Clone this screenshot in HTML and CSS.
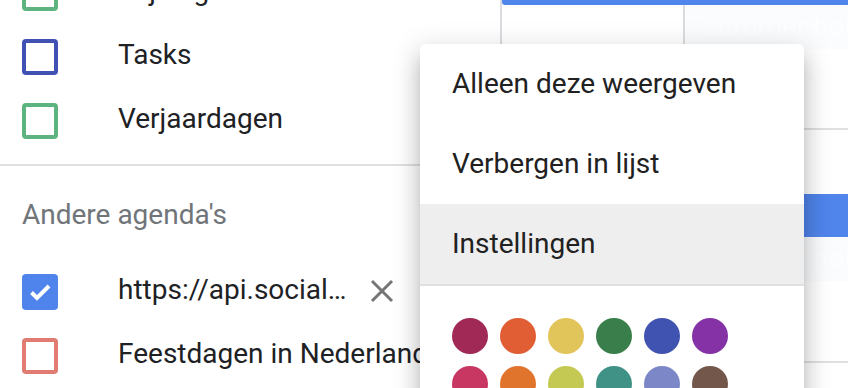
FILE: index.html
```html
<!DOCTYPE html>
<html>
<head>
<meta charset="utf-8">
<title>Agenda</title>
<link rel="stylesheet" href="styles.css">
</head>
<body>

<div class="page">
<div class="sidebar">
	<ul class="calList mine">
	<li><span class="box green"></span><span class="label">Mijn agenda</span></li>
	<li><span class="box indigo"></span><span class="label">Tasks</span></li>
	<li><span class="box green"></span><span class="label">Verjaardagen</span></li>
	</ul>

	<div class="divider"></div>

	<div class="heading">Andere agenda's</div>

	<ul class="calList">
	<li>
		<span class="box blue checked">
			<svg width="36" height="36" viewBox="0 0 36 36"><polyline points="9.5,18.5 15,24 27,12" fill="none" stroke="#fff" stroke-width="4"/></svg>
		</span>
		<span class="label">https://api.social…</span>
		<svg class="remove" width="24" height="24" viewBox="0 0 24 24"><path d="M2 2L22 22M22 2L2 22" stroke="#757575" stroke-width="3"/></svg>
	</li>
	<li><span class="box red"></span><span class="label">Feestdagen in Nederland</span></li>
	</ul>
</div>

<div class="main">
	<div class="eventTail"></div>
	<div class="week">
		<div class="day"></div>
		<div class="day">
			<div class="faded">summer holidays</div>
		</div>
	</div>
	<div class="week tall">
		<div class="day"></div>
		<div class="day">
			<div class="chip"></div>
			<div class="faded">summer holidays</div>
		</div>
	</div>
	<div class="week">
		<div class="day"></div>
		<div class="day"></div>
	</div>
</div>
</div>

<div class="menu">
	<div class="menuItem">Alleen deze weergeven</div>
	<div class="menuItem">Verbergen in lijst</div>
	<div class="menuItem active">Instellingen</div>
	<div class="swatches">
		<span class="swatch" style="background:#a02955"></span>
		<span class="swatch" style="background:#e15d33"></span>
		<span class="swatch" style="background:#e2c55a"></span>
		<span class="swatch" style="background:#3a7f4b"></span>
		<span class="swatch" style="background:#4153b0"></span>
		<span class="swatch" style="background:#8432a6"></span>
		<span class="swatch" style="background:#c83662"></span>
		<span class="swatch" style="background:#e0742d"></span>
		<span class="swatch" style="background:#c3c952"></span>
		<span class="swatch" style="background:#419286"></span>
		<span class="swatch" style="background:#7b87c6"></span>
		<span class="swatch" style="background:#73574b"></span>
	</div>
</div>

</body>
</html>
```

FILE: styles.css
```css
html, body {
	margin: 0;
	padding: 0;
	background-color: white;
	font-family: Roboto, "Liberation Sans", sans-serif;
	overflow: hidden;
	height: 388px;
}
.page {
	display: flex;
	height: 388px;
}
.sidebar {
	width: 500px;
	flex: none;
	border-right: 2px solid #dadce0;
}
.calList {
	list-style: none;
	margin: 0;
	padding: 0;
}
.calList.mine {
	margin-top: -41px;
}
.calList li {
	display: flex;
	align-items: center;
	height: 64px;
	padding-left: 22px;
	white-space: nowrap;
}
.box {
	box-sizing: border-box;
	width: 36px;
	height: 36px;
	flex: none;
	border: 4px solid;
	border-radius: 4px;
	margin-right: 60px;
	margin-top: 4px;
}
.box.green { border-color: #5db47f; }
.box.indigo { border-color: #4152b2; }
.box.red { border-color: #e07c74; }
.box.checked {
	border: none;
	background-color: #4f84ec;
}
.box svg {
	display: block;
}
.label {
	font-size: 28px;
	line-height: 36px;
	color: #202124;
}
.remove {
	margin-left: 23px;
	margin-top: 2px;
}
.divider {
	height: 2px;
	background-color: #e0e0e0;
	margin-top: 13px;
}
.heading {
	font-size: 28px;
	line-height: 40px;
	color: #70757a;
	padding-left: 22px;
	margin-top: 29px;
	margin-bottom: 23px;
}
.main {
	flex: 1;
	display: flex;
	flex-direction: column;
}
.eventTail {
	flex: none;
	height: 5px;
	background-color: #5085ec;
	border-bottom-left-radius: 3px;
}
.week {
	flex: none;
	display: grid;
	grid-template-columns: 183px 1fr;
	height: 123px;
	border-bottom: 2px solid #e0e0e0;
}
.week.tall {
	height: 231px;
}
.day {
	border-right: 2px solid #dadce0;
}
.day:last-child {
	border-right: none;
}
.week.tall .day:last-child {
	padding-top: 64px;
}
.chip {
	height: 43px;
	background-color: #5085ec;
}
.faded {
	height: 44px;
	background-color: #fbfcfe;
	color: #fdfeff;
	font-size: 28px;
	line-height: 44px;
	padding-left: 18px;
	white-space: nowrap;
	overflow: hidden;
}
.menu {
	position: absolute;
	left: 420px;
	top: 44px;
	width: 384px;
	height: 400px;
	background-color: white;
	border-radius: 5px;
	box-shadow: 0 16px 20px 2px rgba(0,0,0,0.14), 0 6px 28px 4px rgba(0,0,0,0.12), 0 10px 10px -6px rgba(0,0,0,0.2);
}
.menuItem {
	height: 80px;
	line-height: 80px;
	padding-left: 32px;
	font-size: 28px;
	color: #212121;
}
.menuItem.active {
	background-color: #eeeeee;
	border-bottom: 2px solid #e0e0e0;
}
.swatches {
	display: grid;
	grid-template-columns: repeat(6, 36px);
	gap: 12px;
	padding: 32px 0 0 32px;
}
.swatch {
	width: 36px;
	height: 36px;
	border-radius: 50%;
}
```
